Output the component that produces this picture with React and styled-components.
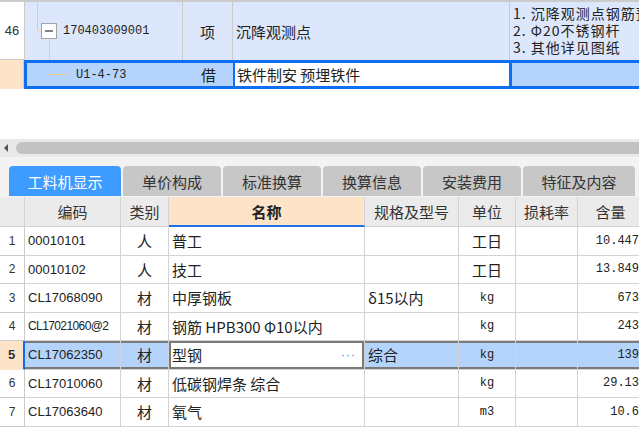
import React from 'react'
import styled, { createGlobalStyle, css } from 'styled-components'

const GlobalStyle = createGlobalStyle`
  html, body { margin: 0; padding: 0; background: #fff; }
  body {
    width: 639px;
    height: 429px;
    overflow: hidden;
    font-family: "Noto Sans CJK SC", "Noto Sans", sans-serif;
    color: #222;
  }
  * { box-sizing: border-box; }
`;

const GRID_LINE = '#cbcbcb';
const ROW_BLUE = '#dce7fb';
const SEL_BLUE = '#b5d4fc';
const EDGE_BLUE = '#0f6ef2';
const PEACH = '#fde4c8';
const TREE = '#f6c68c';

const Page = styled.div`
  width: 639px;
  height: 429px;
  overflow: hidden;
  display: flex;
  flex-direction: column;
  background: #fff;
`;

/* ---------- upper grid ---------- */

const TopRow = styled.div`
  display: grid;
  grid-template-columns: 25px 158px 50px 277px 200px;
  height: 60px;
  border-top: 2px solid ${GRID_LINE};
`;

const TopCell = styled.div`
  display: flex;
  align-items: center;
  justify-content: ${p => (p.$center ? 'center' : 'flex-start')};
  padding-left: ${p => p.$pad || 0}px;
  background: ${p => p.$bg || ROW_BLUE};
  border-right: 1px solid ${GRID_LINE};
  font-size: 15px;
  white-space: nowrap;
  overflow: hidden;
`;

const RowNo = styled.div`
  display: flex;
  align-items: center;
  justify-content: center;
  background: ${p => p.$bg || '#fff'};
  border-right: ${p => (p.$edge ? `2px solid ${EDGE_BLUE}` : `1px solid ${GRID_LINE}`)};
  border-bottom: 1px solid ${p => (p.$bg ? PEACH : GRID_LINE)};
  font-family: "Liberation Sans", sans-serif;
  font-size: ${p => p.$size || 12}px;
  font-weight: ${p => (p.$bold ? 700 : 400)};
  color: #333;
`;

const MonoText = styled.span`
  font-family: "Liberation Mono", monospace;
  font-size: 12px;
  color: #222;
`;

const Feature = styled.div`
  padding: 3px 0 0 3px;
  background: ${ROW_BLUE};
  font-size: 14px;
  letter-spacing: 1px;
  line-height: 17px;
  white-space: nowrap;
  overflow: hidden;
`;

const EditRow = styled.div`
  display: grid;
  grid-template-columns: 24px 1fr;
  height: 29px;
`;

const EditBody = styled.div`
  display: grid;
  grid-template-columns: 156px 50px 279px 200px;
  border: 3px solid ${EDGE_BLUE};
  border-right: none;
  background: ${SEL_BLUE};
  overflow: hidden;
`;

const EditCell = styled.div`
  display: flex;
  align-items: center;
  justify-content: ${p => (p.$center ? 'center' : 'flex-start')};
  font-size: 15px;
  white-space: nowrap;
  ${p => p.$divider && css`border-left: 1px solid #c3cfe0;`}
  ${p => p.$editing && css`
    background: #fff;
    border-left: 2px solid ${EDGE_BLUE};
    border-right: 3px solid ${EDGE_BLUE};
    padding-left: 2px;
  `}
`;

const Spacer = styled.div`
  height: 50px;
  background: #fff;
`;

/* ---------- scrollbar + tabs ---------- */

const HScroll = styled.div`
  height: 18px;
  background: #e9e9e9;
  display: flex;
  align-items: center;
  padding-left: 4px;
`;

const ArrowLeft = styled.span`
  width: 0;
  height: 0;
  border-top: 4px solid transparent;
  border-bottom: 4px solid transparent;
  border-right: 4px solid #555;
`;

const Thumb = styled.div`
  margin-left: 8px;
  flex: 1;
  margin-right: -20px;
  height: 12px;
  border-radius: 6px;
  background: #c2c2c2;
`;

const TabBar = styled.div`
  height: 40px;
  background: #f3f3f3;
  padding: 9px 0 0 9px;
  display: flex;
  gap: 2px;
`;

const Tab = styled.div`
  width: ${p => p.$w}px;
  height: 30px;
  border-radius: 4px 4px 0 0;
  background: ${p => (p.$active ? '#3e9bff' : '#c7c7c7')};
  color: ${p => (p.$active ? '#fff' : '#333')};
  font-size: 15px;
  display: flex;
  align-items: center;
  justify-content: center;
  flex-shrink: 0;
`;

/* ---------- lower grid ---------- */

const COLS = '25px 96px 48px 196px 94px 57px 62px 66px';

const HeadRow = styled.div`
  display: grid;
  grid-template-columns: ${COLS};
  height: 30px;
  background: #ebebeb;
`;

const HeadCell = styled.div`
  display: flex;
  align-items: center;
  justify-content: center;
  font-size: 15px;
  color: #333;
  white-space: nowrap;
  border-right: 1px solid #d3d3d3;
  border-bottom: 1px solid #d3d3d3;
  ${p => p.$focus && css`
    background: ${PEACH};
    font-weight: 700;
    color: #222;
    border-bottom: 2px solid #1f6fe6;
  `}
`;

const DataRow = styled.div`
  display: grid;
  grid-template-columns: ${COLS};
  height: 28.5px;
`;

const Cell = styled.div`
  display: flex;
  align-items: center;
  justify-content: ${p => p.$align || 'flex-start'};
  padding: 0 ${p => (p.$align === 'flex-end' ? 4 : 0)}px 0 ${p => (p.$align ? 0 : 3)}px;
  border-right: 1px solid #d3d3d3;
  border-bottom: 1px solid #d3d3d3;
  font-size: 15px;
  white-space: nowrap;
  overflow: hidden;
  background: #fff;
  ${p => p.$sel && css`
    background: ${SEL_BLUE};
    box-shadow: inset 0 2px 0 #7a7a7a, inset 0 -2px 0 #7a7a7a;
  `}
  ${p => p.$editing && css`
    background: #fff;
    justify-content: space-between;
    padding-right: 8px;
    box-shadow: inset 0 2px 0 #7a7a7a, inset 0 -2px 0 #7a7a7a,
      inset 2px 0 0 #7a7a7a, inset -2px 0 0 #7a7a7a;
  `}
`;

const Code = styled.span`
  font-family: "Liberation Sans", sans-serif;
  font-size: ${p => (p.$tight ? 12 : 13)}px;
  letter-spacing: ${p => (p.$tight ? -0.6 : 0)}px;
  color: #222;
`;

const Dots = styled.span`
  color: #3b8de0;
  font-family: "Liberation Sans", sans-serif;
  font-size: 12px;
  letter-spacing: 1px;
`;

function TreeParent() {
  return (
    <svg width="38" height="58" style={{ flexShrink: 0 }}>
      <path d="M12.5 0V28.5H16" stroke={TREE} fill="none" />
      <rect x="16.5" y="21.5" width="15" height="15" fill="#fff" stroke="#a3a3a3" />
      <path d="M20 29H28" stroke="#333" strokeWidth="1.2" />
      <path d="M24.5 36.5V58" stroke={TREE} fill="none" />
    </svg>
  );
}

function TreeChild() {
  return (
    <svg width="49" height="23" style={{ flexShrink: 0 }}>
      <path d="M22.5 0V11.5H41" stroke={TREE} fill="none" />
    </svg>
  );
}

const tabs = [
  { label: '工料机显示', w: 112, active: true },
  { label: '单价构成', w: 98 },
  { label: '标准换算', w: 98 },
  { label: '换算信息', w: 98 },
  { label: '安装费用', w: 98 },
  { label: '特征及内容', w: 112 },
];

const rows = [
  { no: 1, code: '00010101', type: '人', name: '普工', spec: '', unit: '工日', qty: '10.447' },
  { no: 2, code: '00010102', type: '人', name: '技工', spec: '', unit: '工日', qty: '13.849' },
  { no: 3, code: 'CL17068090', type: '材', name: '中厚钢板', spec: 'δ15以内', unit: 'kg', qty: '673' },
  { no: 4, code: 'CL17021060@2', type: '材', name: '钢筋 HPB300 Φ10以内', spec: '', unit: 'kg', qty: '243' },
  { no: 5, code: 'CL17062350', type: '材', name: '型钢', spec: '综合', unit: 'kg', qty: '139', sel: true },
  { no: 6, code: 'CL17010060', type: '材', name: '低碳钢焊条 综合', spec: '', unit: 'kg', qty: '29.13' },
  { no: 7, code: 'CL17063640', type: '材', name: '氧气', spec: '', unit: 'm3', qty: '10.6' },
];

function isMonoUnit(u) {
  return /^[a-z0-9]+$/i.test(u);
}

export default function App() {
  return (
    <Page>
      <GlobalStyle />

      <TopRow>
        <RowNo $size={13}>46</RowNo>
        <TopCell>
          <TreeParent />
          <MonoText>170403009001</MonoText>
        </TopCell>
        <TopCell $center>项</TopCell>
        <TopCell $pad={3}>沉降观测点</TopCell>
        <Feature>
          <div>1. 沉降观测点钢筋预埋</div>
          <div>2. Φ20不锈钢杆</div>
          <div>3. 其他详见图纸</div>
        </Feature>
      </TopRow>

      <EditRow>
        <RowNo $bg={PEACH} />
        <EditBody>
          <EditCell>
            <TreeChild />
            <MonoText>U1-4-73</MonoText>
          </EditCell>
          <EditCell $center $divider>借</EditCell>
          <EditCell $editing>铁件制安 预埋铁件</EditCell>
          <EditCell />
        </EditBody>
      </EditRow>

      <Spacer />

      <HScroll>
        <ArrowLeft />
        <Thumb />
      </HScroll>

      <TabBar>
        {tabs.map(t => (
          <Tab key={t.label} $w={t.w} $active={t.active}>{t.label}</Tab>
        ))}
      </TabBar>

      <HeadRow>
        <HeadCell />
        <HeadCell>编码</HeadCell>
        <HeadCell>类别</HeadCell>
        <HeadCell $focus>名称</HeadCell>
        <HeadCell>规格及型号</HeadCell>
        <HeadCell>单位</HeadCell>
        <HeadCell>损耗率</HeadCell>
        <HeadCell>含量</HeadCell>
      </HeadRow>

      {rows.map(r => (
        <DataRow key={r.no}>
          {r.sel ? (
            <RowNo $bg={PEACH} $edge $bold $size={13}>{r.no}</RowNo>
          ) : (
            <RowNo>{r.no}</RowNo>
          )}
          <Cell $sel={r.sel}><Code $tight={r.code.length > 10}>{r.code}</Code></Cell>
          <Cell $sel={r.sel} $align="center">{r.type}</Cell>
          <Cell $sel={r.sel} $editing={r.sel}>
            <span>{r.name}</span>
            {r.sel && <Dots>···</Dots>}
          </Cell>
          <Cell $sel={r.sel}>{r.spec}</Cell>
          <Cell $sel={r.sel} $align="center">
            {isMonoUnit(r.unit) ? <MonoText>{r.unit}</MonoText> : r.unit}
          </Cell>
          <Cell $sel={r.sel} />
          <Cell $sel={r.sel} $align="flex-end"><MonoText>{r.qty}</MonoText></Cell>
        </DataRow>
      ))}
    </Page>
  );
}
